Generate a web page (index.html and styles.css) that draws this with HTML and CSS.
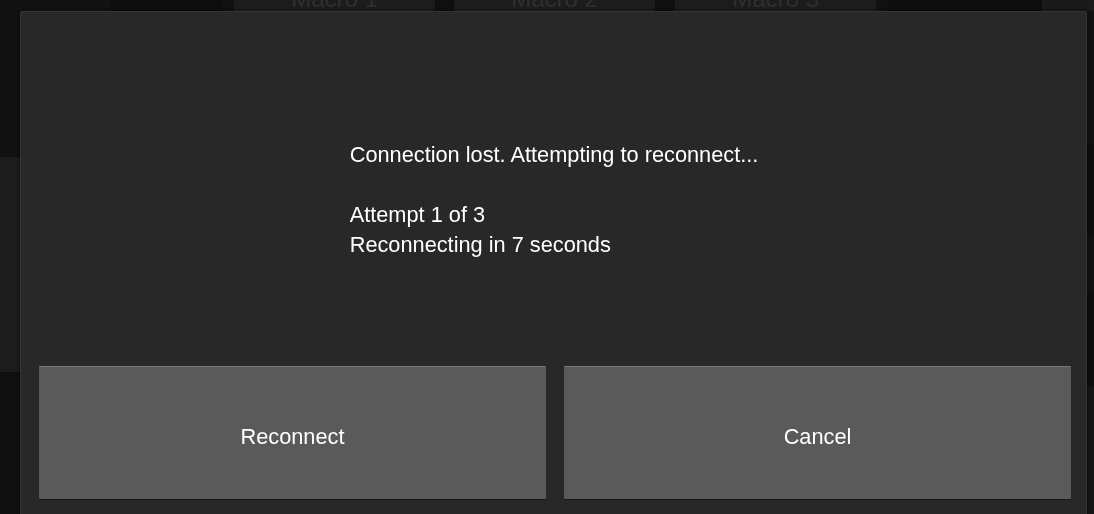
FILE: index.html
```html
<!DOCTYPE html>
<html>
<head>
<meta charset="utf-8">
<link rel="stylesheet" href="styles.css">
</head>
<body>
<div class="page">
  <div class="topbar">
    <div class="cell c1"></div>
    <div class="cell c2"></div>
    <div class="cell c3"></div>
    <div class="macro">Macro 1</div>
    <div class="cell gap"></div>
    <div class="macro">Macro 2</div>
    <div class="cell gap2"></div>
    <div class="macro">Macro 3</div>
    <div class="cell c4"></div>
    <div class="cell c5"></div>
    <div class="cell c6"></div>
  </div>
  <div class="below">
    <div class="side left">
      <div class="s-a"></div>
      <div class="s-b"></div>
      <div class="s-c"></div>
    </div>
    <div class="middle"></div>
    <div class="side right">
      <div class="r-a"></div>
      <div class="r-b"></div>
      <div class="r-c"></div>
      <div class="r-d"></div>
      <div class="r-e"></div>
    </div>
  </div>
</div>

<div class="dialog">
  <div class="message-wrap">
    <div class="message">
      Connection lost. Attempting to reconnect...<br><br>Attempt 1 of 3<br>Reconnecting in 7 seconds
    </div>
  </div>
  <div class="actions">
    <button class="btn">Reconnect</button>
    <button class="btn">Cancel</button>
  </div>
</div>
</body>
</html>
```
FILE: styles.css
```css
html, body {
  margin: 0;
  padding: 0;
  height: 100%;
  overflow: hidden;
  background: #0f0f0f;
  font-family: "Liberation Sans", Arial, sans-serif;
}

.page {
  display: flex;
  flex-direction: column;
  height: 100%;
}

.topbar {
  display: flex;
  height: 40px;
  margin-top: -29px;
  flex: none;
}

.cell { height: 100%; }
.c1 { width: 110px; background: #121212; }
.c2 { width: 112px; background: #0d0d0d; }
.c3 { width: 12px; background: #111111; }
.gap { width: 19px; background: #0f0f0f; }
.gap2 { width: 20px; background: #0f0f0f; }
.c4 { width: 12px; background: #111111; }
.c5 { width: 154px; background: #0d0d0d; }
.c6 { flex: 1; background: #1a1a1a; }

.macro {
  width: 201px;
  background: #1c1c1c;
  color: #2f2f2f;
  font-size: 24px;
  line-height: 24px;
  display: flex;
  align-items: flex-end;
  justify-content: center;
}

.below {
  flex: 1;
  display: flex;
}

.side { display: flex; flex-direction: column; }
.left { width: 20px; }
.right { width: 7px; margin-left: auto; }
.middle { flex: 1; }

.s-a { height: 146px; background: #111111; }
.s-b { height: 215px; background: #1c1c1c; }
.s-c { flex: 1; background: #0f0f0f; }

.r-a { height: 132px; background: #121212; }
.r-b { height: 92px; background: #0e0e0e; }
.r-c { height: 57px; background: #131313; }
.r-d { height: 95px; background: #0f0f0f; }
.r-e { flex: 1; background: #161616; }

.dialog {
  position: fixed;
  top: 11px;
  left: 20px;
  width: 1067px;
  height: 540px;
  background: #282828;
  border: 1px solid #343434;
  border-radius: 2px;
  box-shadow: 0 0 4px rgba(0, 0, 0, 0.5);
  display: flex;
  flex-direction: column;
  padding: 0 15px 0 18px;
  box-sizing: border-box;
}

.message-wrap {
  display: flex;
  justify-content: center;
  padding-top: 128px;
  padding-right: 2px;
}

.message {
  color: #ffffff;
  font-size: 21.75px;
  line-height: 30px;
  text-align: left;
}

.actions {
  display: flex;
  gap: 18px;
  margin-top: 106px;
}

.btn {
  flex: 1;
  height: 133px;
  background: #5a5a5a;
  border: none;
  border-top: 1px solid #787878;
  box-shadow: 0 1px 1px rgba(0, 0, 0, 0.45);
  border-radius: 1px;
  color: #ffffff;
  font-family: "Liberation Sans", Arial, sans-serif;
  font-size: 21.75px;
  padding: 7px 0 0 0;
  margin: 0;
}
```
